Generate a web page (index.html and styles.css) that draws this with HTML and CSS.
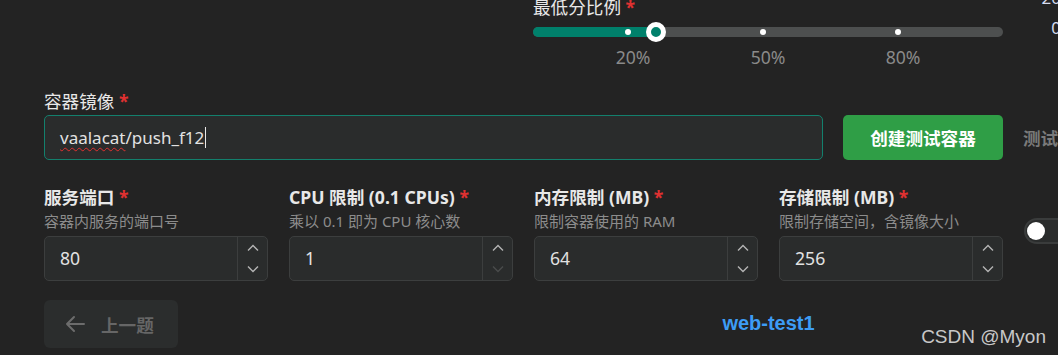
FILE: index.html
```html
<!DOCTYPE html>
<html lang="zh-CN">
<head>
<meta charset="utf-8">
<title>容器配置</title>
<link rel="stylesheet" href="styles.css">
</head>
<body>
<div class="page">
  <section class="grid top-row">
    <div class="slider-field">
      <div class="label light">最低分比例 <span class="req">*</span></div>
      <div class="slider">
        <div class="track">
          <div class="fill" style="width:123px"></div>
          <span class="dot" style="left:95px"></span>
          <span class="dot" style="left:230px"></span>
          <span class="dot" style="left:365px"></span>
          <span class="thumb" style="left:123px"></span>
        </div>
      </div>
      <div class="marks">
        <span class="mark" style="left:100px">20%</span>
        <span class="mark" style="left:235px">50%</span>
        <span class="mark" style="left:370px">80%</span>
      </div>
    </div>
    <div class="peek">
      <span>200</span>
      <span>0</span>
    </div>
  </section>

  <section class="image-row">
    <div class="image-field">
      <div class="label light">容器镜像 <span class="req">*</span></div>
      <div class="text-input focused"><span class="typo">vaalacat</span>/push_f12<span class="caret"></span></div>
    </div>
    <button class="btn-primary">创建测试容器</button>
    <button class="btn-ghost">测试连接</button>
  </section>

  <section class="grid fields">
    <div class="field">
      <div class="label">服务端口 <span class="req">*</span></div>
      <div class="desc">容器内服务的端口号</div>
      <div class="num-input">
        <span class="value">80</span>
        <span class="spin">
          <span class="arrow"><svg width="12" height="8" viewBox="0 0 12 8"><path d="M1 6.5 L6 1.5 L11 6.5" /></svg></span>
          <span class="arrow"><svg width="12" height="8" viewBox="0 0 12 8"><path d="M1 1.5 L6 6.5 L11 1.5" /></svg></span>
        </span>
      </div>
    </div>
    <div class="field">
      <div class="label">CPU 限制 (0.1 CPUs) <span class="req">*</span></div>
      <div class="desc">乘以 0.1 即为 CPU 核心数</div>
      <div class="num-input">
        <span class="value">1</span>
        <span class="spin">
          <span class="arrow"><svg width="12" height="8" viewBox="0 0 12 8"><path d="M1 6.5 L6 1.5 L11 6.5" /></svg></span>
          <span class="arrow disabled"><svg width="12" height="8" viewBox="0 0 12 8"><path d="M1 1.5 L6 6.5 L11 1.5" /></svg></span>
        </span>
      </div>
    </div>
    <div class="field">
      <div class="label">内存限制 (MB) <span class="req">*</span></div>
      <div class="desc">限制容器使用的 RAM</div>
      <div class="num-input">
        <span class="value">64</span>
        <span class="spin">
          <span class="arrow"><svg width="12" height="8" viewBox="0 0 12 8"><path d="M1 6.5 L6 1.5 L11 6.5" /></svg></span>
          <span class="arrow"><svg width="12" height="8" viewBox="0 0 12 8"><path d="M1 1.5 L6 6.5 L11 1.5" /></svg></span>
        </span>
      </div>
    </div>
    <div class="field">
      <div class="label">存储限制 (MB) <span class="req">*</span></div>
      <div class="desc">限制存储空间，含镜像大小</div>
      <div class="num-input">
        <span class="value">256</span>
        <span class="spin">
          <span class="arrow"><svg width="12" height="8" viewBox="0 0 12 8"><path d="M1 6.5 L6 1.5 L11 6.5" /></svg></span>
          <span class="arrow"><svg width="12" height="8" viewBox="0 0 12 8"><path d="M1 1.5 L6 6.5 L11 1.5" /></svg></span>
        </span>
      </div>
    </div>
    <div class="field toggle-field">
      <span class="toggle"><span class="knob"></span></span>
    </div>
  </section>

  <section class="grid footer">
    <button class="btn-back">
      <svg width="22" height="18" viewBox="0 0 22 18"><path d="M20 9 H3 M10 2 L3 9 L10 16" /></svg>
      <span>上一题</span>
    </button>
    <div class="challenge-name">web-test1</div>
  </section>
</div>
<div class="watermark">CSDN @Myon</div>
</body>
</html>
```

FILE: styles.css
```css
* { box-sizing: border-box; }

html, body {
  margin: 0;
  padding: 0;
}

body {
  width: 1058px;
  height: 355px;
  overflow: hidden;
  background: #232323;
  color: #e6e6e6;
  font-family: "Noto Sans", "Noto Sans CJK SC", sans-serif;
  position: relative;
}

.page {
  padding-left: 44px;
  width: 1250px;
  margin-top: -5px;
}

.grid {
  display: grid;
  grid-template-columns: repeat(5, 224px);
  column-gap: 21px;
}

.label {
  font-size: 17.6px;
  line-height: 24px;
  font-weight: 700;
  color: #e8e8e8;
  white-space: nowrap;
}

.label.light {
  font-weight: 400;
}

.req {
  color: #e03131;
  font-weight: 700;
}

/* slider */
.slider-field {
  grid-column: 3 / span 2;
  margin-left: -1px;
}

.slider {
  height: 20px;
  margin-top: 3px;
  display: flex;
  align-items: center;
}

.track {
  position: relative;
  width: 470px;
  height: 10px;
  border-radius: 5px;
  background: #4d4f4f;
}

.fill {
  height: 10px;
  border-radius: 5px 0 0 5px;
  background: #00806b;
}

.dot {
  position: absolute;
  top: 50%;
  width: 6px;
  height: 6px;
  border-radius: 50%;
  background: #ffffff;
  transform: translate(-50%, -50%);
}

.thumb {
  position: absolute;
  top: 50%;
  width: 20px;
  height: 20px;
  border-radius: 50%;
  background: #00806b;
  border: 5px solid #ffffff;
  transform: translate(-50%, -50%);
}

.marks {
  position: relative;
  height: 24px;
  margin-top: 3px;
}

.mark {
  position: absolute;
  top: 0;
  transform: translateX(-50%);
  font-size: 17.6px;
  line-height: 24px;
  color: #8a8a8a;
}

.peek {
  grid-column: 5;
  width: 64px;
  display: flex;
  flex-direction: column;
  align-items: center;
  margin-top: -12px;
  font-size: 17px;
  line-height: 30px;
  color: #d6dcf0;
}

/* image row */
.image-row {
  display: flex;
  align-items: flex-end;
  gap: 20px;
  margin-top: 20px;
  width: 1250px;
}

.image-field {
  width: 779px;
  flex: none;
}

.text-input {
  margin-top: 2px;
  height: 45px;
  border: 1px solid #3c3e3e;
  border-radius: 5px;
  background: #2a2c2c;
  display: flex;
  align-items: center;
  padding-left: 15px;
  font-size: 17px;
  color: #e2e2e2;
}

.text-input.focused {
  border-color: #13806d;
}

.typo {
  text-decoration: underline wavy #e03030 1px;
  text-underline-offset: 3px;
  text-decoration-skip-ink: none;
}

.caret {
  display: inline-block;
  width: 1px;
  height: 21px;
  margin-left: 1px;
  background: #e8e8e8;
}

.btn-primary {
  flex: none;
  width: 160px;
  height: 45px;
  border: none;
  border-radius: 5px;
  background: #2f9e46;
  color: #ffffff;
  font-family: "Noto Sans CJK SC", sans-serif;
  font-size: 17.6px;
  font-weight: 700;
  padding: 0;
}

.btn-ghost {
  flex: none;
  height: 45px;
  border: none;
  background: transparent;
  color: #7a7a7a;
  font-family: "Noto Sans CJK SC", sans-serif;
  font-size: 17.6px;
  font-weight: 700;
  padding: 0;
}

/* number fields */
.fields {
  margin-top: 25px;
}

.desc {
  margin-top: 2px;
  font-size: 15px;
  line-height: 20px;
  color: #8c8c8c;
  white-space: nowrap;
}

.num-input {
  margin-top: 5px;
  height: 45px;
  border: 1px solid #3c3e3e;
  border-radius: 5px;
  background: #2a2c2c;
  display: flex;
}

.value {
  flex: 1;
  display: flex;
  align-items: center;
  padding-left: 15px;
  padding-bottom: 2px;
  font-size: 17.6px;
  color: #e2e2e2;
}

.spin {
  width: 30px;
  border-left: 1px solid #3c3e3e;
  display: flex;
  flex-direction: column;
}

.arrow {
  flex: 1;
  display: flex;
  align-items: center;
  justify-content: center;
}

.arrow svg path {
  fill: none;
  stroke: #b4b4b4;
  stroke-width: 1.4;
}

.arrow.disabled svg path {
  stroke: #4a4c4c;
}

.toggle-field {
  padding-top: 33px;
}

.toggle {
  display: flex;
  align-items: center;
  width: 50px;
  height: 26px;
  border: 2px solid #3a3c3c;
  border-radius: 13px;
  background: #2a2c2c;
  padding-left: 1px;
}

.knob {
  width: 18px;
  height: 18px;
  border-radius: 50%;
  background: #ffffff;
}

/* footer */
.footer {
  margin-top: 19px;
  align-items: center;
}

.btn-back {
  width: 134px;
  height: 48px;
  border: none;
  border-radius: 6px;
  background: #2b2d2d;
  color: #666666;
  display: flex;
  align-items: center;
  gap: 15px;
  padding: 0 0 0 20px;
  font-family: "Noto Sans CJK SC", sans-serif;
  font-size: 17.6px;
  font-weight: 700;
}

.btn-back svg path {
  fill: none;
  stroke: #6c6c6c;
  stroke-width: 2;
  stroke-linecap: round;
  stroke-linejoin: round;
}

.challenge-name {
  grid-column: 3 / span 2;
  text-align: center;
  font-family: "Liberation Sans", Arial, sans-serif;
  font-size: 20px;
  font-weight: 700;
  color: #3d9cf5;
  margin-top: -2px;
}

.watermark {
  position: absolute;
  right: 12px;
  bottom: 7px;
  font-family: "Liberation Sans", Arial, sans-serif;
  font-size: 19px;
  color: #c8c8c8;
}
```
